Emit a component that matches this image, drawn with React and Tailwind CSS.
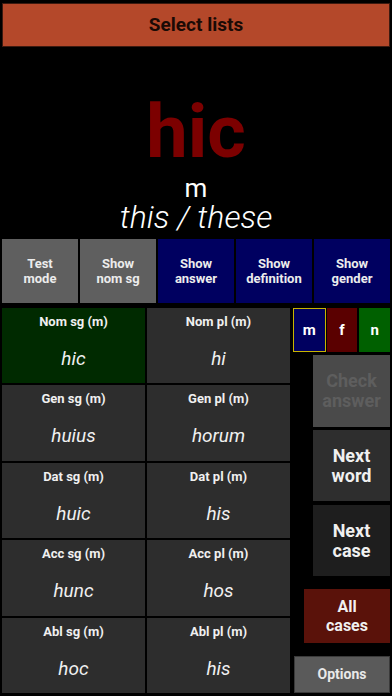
import React from "react"

const toggles = [
  { label: ["Test", "mode"], bg: "bg-[#5f5f5f]" },
  { label: ["Show", "nom sg"], bg: "bg-[#5f5f5f]" },
  { label: ["Show", "answer"], bg: "bg-[#000060]" },
  { label: ["Show", "definition"], bg: "bg-[#000060]" },
  { label: ["Show", "gender"], bg: "bg-[#000060]" },
]

const forms = [
  ["Nom sg (m)", "hic", "Nom pl (m)", "hi"],
  ["Gen sg (m)", "huius", "Gen pl (m)", "horum"],
  ["Dat sg (m)", "huic", "Dat pl (m)", "his"],
  ["Acc sg (m)", "hunc", "Acc pl (m)", "hos"],
  ["Abl sg (m)", "hoc", "Abl pl (m)", "his"],
]

function Cell({ label, value, active }) {
  return (
    <div className={`flex flex-col items-center ${active ? "bg-[#002a00]" : "bg-[#2d2d2d]"}`}>
      <div className="mt-[6px] text-[13px] font-bold text-[#f0f0f0] leading-[16px]">{label}</div>
      <div className="mt-[17px] text-[19px] italic text-[#f0f0f0] leading-[24px]">{value}</div>
    </div>
  )
}

export default function App() {
  return (
    <div className="w-[392px] h-[696px] bg-black overflow-hidden font-['Roboto',sans-serif] select-none">
      <div className="mx-[2px] mt-[3px] h-[44px] bg-[#b4482a] border border-[#3c1a10] flex items-center justify-center">
        <span className="text-[19px] font-bold text-[#1a0a05]">Select lists</span>
      </div>

      <div className="h-[192px] flex flex-col items-center">
        <div className="mt-[48px] text-[74px] font-bold text-[#7c0000] leading-[74px]">hic</div>
        <div className="mt-[8px] text-[26px] text-white leading-[22px]">m</div>
        <div className="mt-[2px] text-[32px] italic font-light text-white leading-[32px]">this / these</div>
      </div>

      <div className="flex gap-[2px] px-[2px] h-[64px]">
        {toggles.map((t) => (
          <div
            key={t.label.join(" ")}
            className={`flex-1 ${t.bg} flex flex-col items-center justify-center text-[13px] font-bold text-[#ececec] leading-[15px]`}
          >
            <span>{t.label[0]}</span>
            <span>{t.label[1]}</span>
          </div>
        ))}
      </div>

      <div className="flex mt-[5px] h-[385px]">
        <div className="ml-[2px] w-[288px] grid grid-cols-2 grid-rows-5 gap-[2px]">
          {forms.map((r, i) => (
            <React.Fragment key={r[0]}>
              <Cell label={r[0]} value={r[1]} active={i === 0} />
              <Cell label={r[2]} value={r[3]} />
            </React.Fragment>
          ))}
        </div>

        <div className="ml-[2px] w-[98px] flex flex-col">
          <div className="flex h-[44px] gap-[1px] ml-[1px]">
            <div className="w-[33px] bg-[#000060] border border-[#c8b400] flex items-center justify-center text-[15px] font-bold text-white">
              m
            </div>
            <div className="w-[31px] bg-[#5a0000] flex items-center justify-center text-[15px] font-bold text-white">f</div>
            <div className="w-[31px] ml-[1px] bg-[#006000] flex items-center justify-center text-[15px] font-bold text-white">
              n
            </div>
          </div>

          <div className="ml-[21px] mt-[3px] h-[72px] bg-[#4a4a4a] flex flex-col items-center justify-center text-[18px] font-bold text-[#5e5e5e] leading-[20px]">
            <span>Check</span>
            <span>answer</span>
          </div>
          <div className="ml-[21px] mt-[3px] h-[71px] bg-[#2e2e2e] flex flex-col items-center justify-center text-[18px] font-bold text-[#f0f0f0] leading-[20px]">
            <span>Next</span>
            <span>word</span>
          </div>
          <div className="ml-[21px] mt-[4px] h-[71px] bg-[#1e1e1e] flex flex-col items-center justify-center text-[18px] font-bold text-[#f0f0f0] leading-[20px]">
            <span>Next</span>
            <span>case</span>
          </div>
          <div className="ml-[12px] mt-[13px] h-[54px] bg-[#5a120a] flex flex-col items-center justify-center text-[16px] font-bold text-[#f0f0f0] leading-[19px]">
            <span>All</span>
            <span>cases</span>
          </div>
          <div className="ml-[2px] mt-[13px] h-[37px] bg-[#5a5a5a] border border-[#3a3a3a] flex items-center justify-center text-[14px] font-bold text-[#e8e8e8]">
            Options
          </div>
        </div>
      </div>
    </div>
  )
}
